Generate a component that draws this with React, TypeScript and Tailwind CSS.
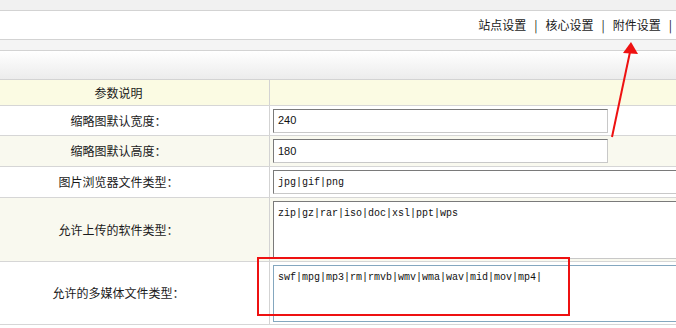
const cn = "font-['Noto_Sans_CJK_SC','Noto_Sans',sans-serif]";

const inputCls =
  "h-[24px] bg-white border border-t-[#7a7a7a] border-l-[#7a7a7a] border-r-[#c8c8c8] border-b-[#c8c8c8] px-[4px] flex items-center text-[#111]";

type Row = { label: string; bg: string; h: string; body: React.ReactNode };

export default function App() {
  const rows: Row[] = [
    {
      label: "缩略图默认宽度：",
      bg: "bg-white",
      h: "h-[30px]",
      body: <div className={`${inputCls} w-[335px] font-['Liberation_Sans',sans-serif] text-[11px]`}>240</div>,
    },
    {
      label: "缩略图默认高度：",
      bg: "bg-[#f9f9ef]",
      h: "h-[31px]",
      body: <div className={`${inputCls} w-[335px] font-['Liberation_Sans',sans-serif] text-[11px]`}>180</div>,
    },
    {
      label: "图片浏览器文件类型：",
      bg: "bg-white",
      h: "h-[31px]",
      body: <div className={`${inputCls} w-[420px] font-['Liberation_Mono',monospace] text-[10px]`}>jpg|gif|png</div>,
    },
    {
      label: "允许上传的软件类型：",
      bg: "bg-[#f9f9ef]",
      h: "h-[64px]",
      body: (
        <div className="h-[58px] w-[420px] bg-white border border-t-[#7a7a7a] border-l-[#7a7a7a] border-r-[#c8c8c8] border-b-[#c8c8c8] px-[4px] pt-[6px] font-['Liberation_Mono',monospace] text-[10px] leading-[12px] text-[#111]">
          zip|gz|rar|iso|doc|xsl|ppt|wps
        </div>
      ),
    },
    {
      label: "允许的多媒体文件类型：",
      bg: "bg-white",
      h: "h-[63px]",
      body: (
        <div className="h-[57px] w-[420px] bg-white border border-[#84a7bf] px-[4px] pt-[6px] font-['Liberation_Mono',monospace] text-[10px] leading-[12px] text-[#111]">
          swf|mpg|mp3|rm|rmvb|wmv|wma|wav|mid|mov|mp4|
        </div>
      ),
    },
  ];

  return (
    <div className={`relative w-[676px] h-[328px] overflow-hidden bg-white ${cn} text-[12px] text-[#1a1a1a]`}>
      {/* top bands */}
      <div className="h-[11px] bg-[#f1f1f1] border-b border-[#d3d3d3]" />
      <div className="h-[29px] bg-white border-b border-[#d3d3d3] flex items-center justify-end pr-[4px]">
        <span>站点设置</span>
        <span className="mx-[8px]">|</span>
        <span>核心设置</span>
        <span className="mx-[8px]">|</span>
        <span>附件设置</span>
        <span className="ml-[8px]">|</span>
      </div>
      <div className="h-[11px] bg-[#f4f4f4] border-b border-[#d3d3d3]" />
      <div className="h-[29px] bg-gradient-to-b from-white to-[#ececec] border-b border-[#d3d3d3]" />

      {/* table */}
      <div className="flex h-[26px] bg-[#fbfbe3] border-b border-[#d6d6d6]">
        <div className="w-[270px] border-r border-[#d3d3d3] pr-[32px] flex items-center justify-center">参数说明</div>
        <div className="flex-1" />
      </div>
      {rows.map((r) => (
        <div key={r.label} className={`flex ${r.h} ${r.bg} border-b border-[#d6d6d6]`}>
          <div className="w-[270px] shrink-0 border-r border-[#d3d3d3] pr-[32px] flex items-center justify-center">
            {r.label}
          </div>
          <div className="flex-1 pl-[3px] flex items-center">{r.body}</div>
        </div>
      ))}

      {/* annotation overlays */}
      <div className="absolute left-[257px] top-[257px] w-[313px] h-[59px] border-2 border-[#ee1111]" />
      <svg className="absolute left-0 top-0" width="676" height="328" viewBox="0 0 676 328">
        <line x1="612" y1="137" x2="630" y2="52" stroke="#ee1111" strokeWidth="2" />
        <polygon points="631,42 623,53 638,54" fill="#ee1111" />
      </svg>
    </div>
  );
}
